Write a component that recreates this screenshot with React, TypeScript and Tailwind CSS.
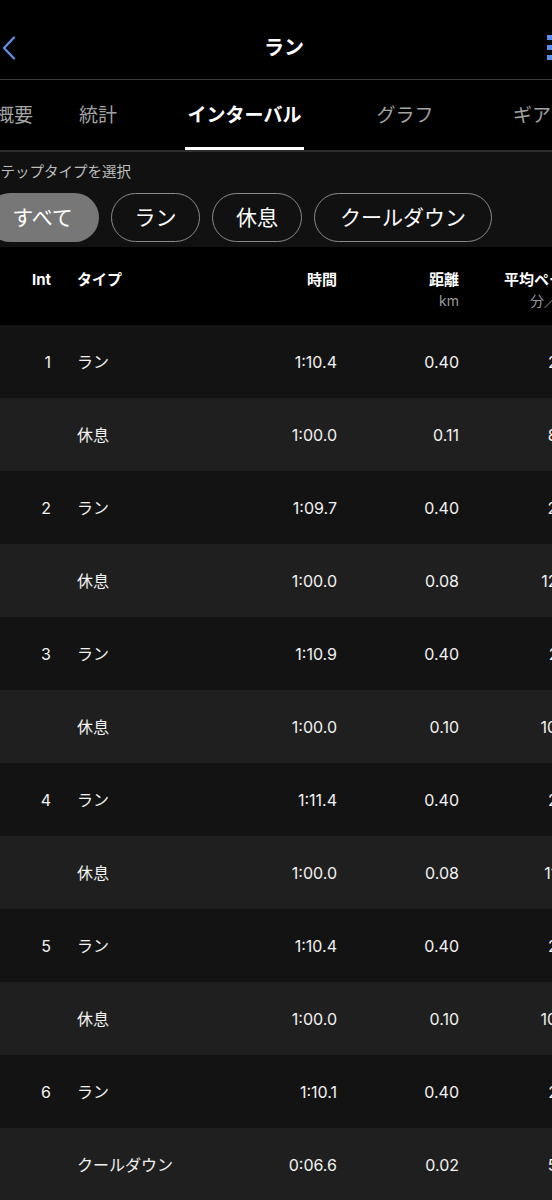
const rows = [
  { n: "1", type: "ラン", time: "1:10.4", dist: "0.40", pace: "2:56" },
  { n: "", type: "休息", time: "1:00.0", dist: "0.11", pace: "8:58" },
  { n: "2", type: "ラン", time: "1:09.7", dist: "0.40", pace: "2:54" },
  { n: "", type: "休息", time: "1:00.0", dist: "0.08", pace: "12:30" },
  { n: "3", type: "ラン", time: "1:10.9", dist: "0.40", pace: "2:57" },
  { n: "", type: "休息", time: "1:00.0", dist: "0.10", pace: "10:00" },
  { n: "4", type: "ラン", time: "1:11.4", dist: "0.40", pace: "2:58" },
  { n: "", type: "休息", time: "1:00.0", dist: "0.08", pace: "11:54" },
  { n: "5", type: "ラン", time: "1:10.4", dist: "0.40", pace: "2:56" },
  { n: "", type: "休息", time: "1:00.0", dist: "0.10", pace: "10:00" },
  { n: "6", type: "ラン", time: "1:10.1", dist: "0.40", pace: "2:55" },
  { n: "", type: "クールダウン", time: "0:06.6", dist: "0.02", pace: "5:30" },
];

function App() {
  return (
    <div className="w-[552px] min-h-screen overflow-hidden bg-black text-white font-[Inter,'Noto_Sans_CJK_JP',sans-serif]">
      {/* top bar */}
      <div className="w-[600px] -ml-[16px] h-[79px] pt-[16px] flex items-center">
        <div className="w-[60px] pl-[18px] flex items-center">
          <svg width="14" height="24" viewBox="0 0 14 24" fill="none">
            <path d="M12 1.5 L2 12 L12 22.5" stroke="#5b8ee6" strokeWidth="2.4" strokeLinecap="round" strokeLinejoin="round" />
          </svg>
        </div>
        <div className="flex-1 text-center text-[20px] font-bold leading-[28px]">ラン</div>
        <div className="w-[60px] pl-[23px] flex items-center">
          <svg width="30" height="26" viewBox="0 0 30 26" fill="#5b8ee6">
            <rect x="0" y="0" width="6" height="5" />
            <rect x="0" y="10" width="6" height="5" />
            <rect x="0" y="20" width="6" height="5" />
            <rect x="10" y="1" width="20" height="3" />
            <rect x="10" y="11" width="20" height="3" />
            <rect x="10" y="21" width="20" height="3" />
          </svg>
        </div>
      </div>
      <div className="h-px bg-[#3a3a3a]" />

      {/* tabs */}
      <div className="h-[70px] flex -ml-[5px] text-[19px] text-[#a3a3a3]">
        <Tab label="概要" w="w-[38px]" />
        <Tab label="統計" w="w-[38px] ml-[46px]" />
        <Tab label="インターバル" w="w-[119px] ml-[68px]" active />
        <Tab label="グラフ" w="w-[56px] ml-[73px]" />
        <Tab label="ギア" w="w-[40px] ml-[79px]" />
      </div>
      <div className="h-[2px] bg-[#2e2e2e]" />

      {/* filter */}
      <div className="bg-[#111111] h-[95px] pt-[10px]">
        <div className="-ml-[14px] text-[14.5px] leading-[20px] text-[#bdbdbd] whitespace-nowrap">ステップタイプを選択</div>
        <div className="-ml-[14px] mt-[11px] flex gap-[12px] text-[21px]">
          <div className="w-[113px] h-[49px] rounded-full bg-[#777777] flex items-center justify-center">すべて</div>
          <div className="w-[89px] h-[49px] rounded-full border border-[#8a8a8a] flex items-center justify-center">ラン</div>
          <div className="w-[90px] h-[49px] rounded-full border border-[#8a8a8a] flex items-center justify-center">休息</div>
          <div className="w-[178px] h-[49px] rounded-full border border-[#8a8a8a] flex items-center justify-center whitespace-nowrap">クールダウン</div>
        </div>
      </div>

      {/* table header */}
      <div className="h-[78px] bg-black flex pt-[23px] text-[15px] font-bold leading-[20px] whitespace-nowrap">
        <div className="w-[51px] shrink-0 text-right">Int</div>
        <div className="w-[160px] shrink-0 ml-[26px]">タイプ</div>
        <div className="w-[100px] shrink-0 text-right">時間</div>
        <div className="w-[122px] shrink-0 text-right">
          <div>距離</div>
          <div className="text-[14px] font-normal text-[#9a9a9a] leading-[18px] mt-[2px]">km</div>
        </div>
        <div className="w-[123px] shrink-0 pl-[45px]">
          <div>平均ペース</div>
          <div className="pl-[26px] text-[14px] font-normal text-[#9a9a9a] leading-[18px] mt-[2px]">分／km</div>
        </div>
      </div>

      {/* rows */}
      {rows.map((r, i) => (
        <div
          key={i}
          className={
            "h-[73px] flex items-center text-[16px] text-[#f2f2f2] whitespace-nowrap " +
            (i % 2 === 0 ? "bg-[#131313]" : "bg-[#1f1f1f]")
          }
        >
          <div className="w-[51px] shrink-0 text-right">{r.n}</div>
          <div className="w-[160px] shrink-0 ml-[26px]">{r.type}</div>
          <div className="w-[100px] shrink-0 text-right">{r.time}</div>
          <div className="w-[122px] shrink-0 text-right">{r.dist}</div>
          <div className="w-[123px] shrink-0 text-right">{r.pace}</div>
        </div>
      ))}
    </div>
  );
}

const Tab = ({ label, w, active }: { label: string; w: string; active?: boolean }) => {
  return (
    <div className={"shrink-0 flex flex-col whitespace-nowrap " + w}>
      <div
        className={
          "flex-1 pt-[6px] flex items-center justify-center " + (active ? "text-white font-bold" : "")
        }
      >
        {label}
      </div>
      <div className={"h-[3px] " + (active ? "bg-white" : "")} />
    </div>
  );
};

export default App;
